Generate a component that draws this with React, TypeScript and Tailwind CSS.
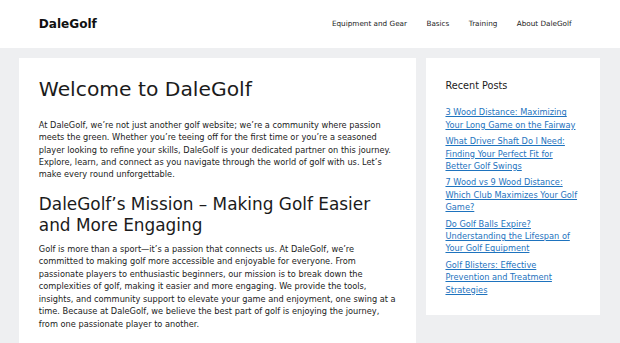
const NAV = ["Equipment and Gear", "Basics", "Training", "About DaleGolf"];

const POSTS = [
  "3 Wood Distance: Maximizing Your Long Game on the Fairway",
  "What Driver Shaft Do I Need: Finding Your Perfect Fit for Better Golf Swings",
  "7 Wood vs 9 Wood Distance: Which Club Maximizes Your Golf Game?",
  "Do Golf Balls Expire? Understanding the Lifespan of Your Golf Equipment",
  "Golf Blisters: Effective Prevention and Treatment Strategies",
];

export default function App() {
  return (
    <div className="min-h-[343px] bg-[#eeeff1] text-[#1b1b1b] font-['DejaVu_Sans',sans-serif] text-[8.23px] leading-[1.5]">
      <header className="bg-white h-12 flex items-center justify-between pl-[38.7px] pr-[38.7px] pt-px">
        <a className="text-[12.1px] font-bold text-[#111111]">DaleGolf</a>
        <nav className="flex">
          {NAV.map((n) => (
            <a key={n} className="px-[9.7px] text-[7.26px] text-[#1b1b1b]">
              {n}
            </a>
          ))}
        </nav>
      </header>

      {/* content + sidebar */}
      <div className="flex pl-[19.4px] pr-[19.4px] pt-[9.7px] gap-[9.7px] items-start">
        <main className="bg-white w-[397px] min-h-[285px] p-[19.4px] pb-[10px]">
          <h1 className="text-[20.3px] leading-[1.2] mb-[17.5px]">Welcome to DaleGolf</h1>
          <p className="mb-[13.3px]">
            At DaleGolf, we’re not just another golf website; we’re a community where passion
            meets the green. Whether you’re teeing off for the first time or you’re a seasoned
            player looking to refine your skills, DaleGolf is your dedicated partner on this
            journey. Explore, learn, and connect as you navigate through the world of golf with
            us. Let’s make every round unforgettable.
          </p>
          <h2 className="text-[16.9px] leading-[1.25] mb-[6.5px]">
            DaleGolf’s Mission – Making Golf Easier and More Engaging
          </h2>
          <p className="leading-[1.52]">
            Golf is more than a sport—it’s a passion that connects us. At DaleGolf, we’re
            committed to making golf more accessible and enjoyable for everyone. From passionate
            players to enthusiastic beginners, our mission is to break down the complexities of
            golf, making it easier and more engaging. We provide the tools, insights, and
            community support to elevate your game and enjoyment, one swing at a time. Because
            at DaleGolf, we believe the best part of golf is enjoying the journey, from one
            passionate player to another.
          </p>
        </main>

        <aside className="bg-white w-[174px] px-[19.4px] pt-[22.5px] pb-[19px]">
          <h2 className="text-[9.7px] leading-[1.2] mb-[14.5px]">Recent Posts</h2>
          <ul className="flex flex-col gap-[4.2px]">
            {POSTS.map((p) => (
              <li key={p}>
                <a className="text-[#1e73be] underline">{p}</a>
              </li>
            ))}
          </ul>
        </aside>
      </div>
    </div>
  );
}
